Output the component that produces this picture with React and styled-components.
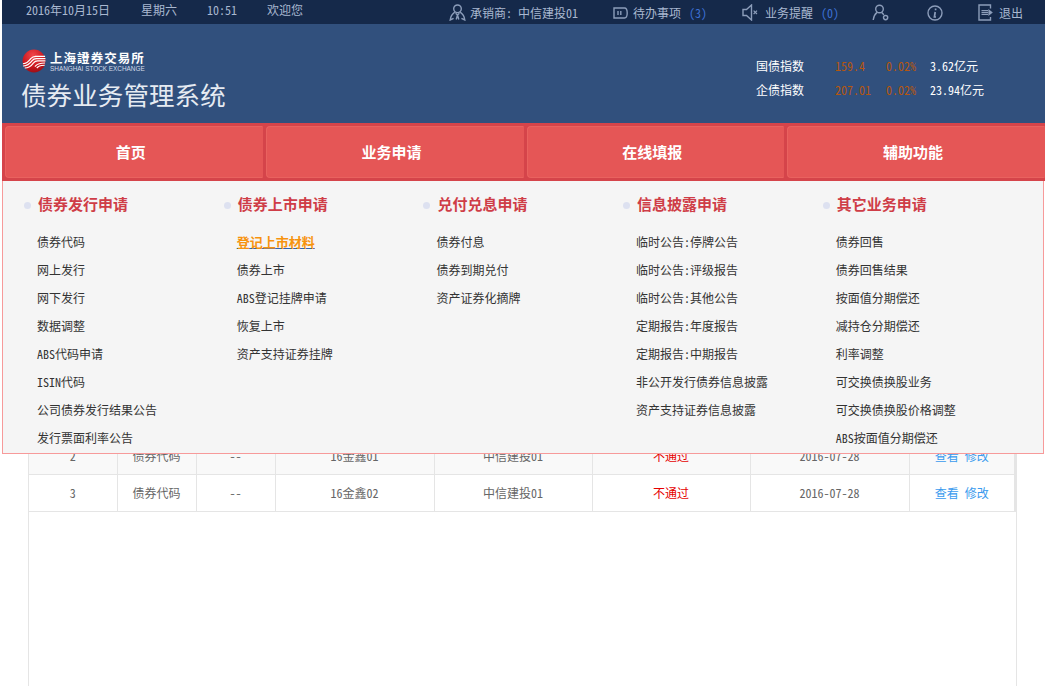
import React from 'react';
import styled, { createGlobalStyle } from 'styled-components';

const GlobalStyle = createGlobalStyle`
  html, body {
    margin: 0;
    padding: 0;
    background: #fff;
    overflow: hidden;
  }
  body {
    font-family: "Noto Sans CJK SC", "Liberation Sans", sans-serif;
    font-size: 12px;
    font-feature-settings: "hwid";
  }
`;

const Page = styled.div`
  position: relative;
  height: 686px;
  padding-left: 2px;
  overflow: hidden;
  display: flex;
  flex-direction: column;
`;

//---------------------------------------- Top bar --------------------------------------
const TopBar = styled.div`
  height: 24px;
  flex: none;
  background: #15294a;
  color: #a9b8d0;
  display: flex;
  justify-content: space-between;
  padding: 0 22px 0 24px;
`;

const TopLeft = styled.div`
  display: flex;
  gap: 30px;
  height: 20px;
  line-height: 20px;
`;

const DateText = styled.span`
  margin-right: 1px;
`;

const TopRight = styled.div`
  display: flex;
  align-items: center;
  padding-top: 1px;
`;

const TopItem = styled.div`
  display: flex;
  align-items: center;
  gap: ${({ $gap }) => $gap || 6}px;
  margin-left: ${({ $ml }) => $ml || 0}px;
  white-space: pre;
`;

const TopCount = styled.span`
  color: #3d70d4;
  margin-left: 8px;
`;

const Icon = styled.svg`
  display: block;
  flex: none;
  fill: none;
  stroke: #8c9dba;
  stroke-width: 1.4;
`;

//---------------------------------------- Header --------------------------------------
const Header = styled.div`
  height: 99px;
  flex: none;
  background: #31507d;
  display: flex;
  justify-content: space-between;
`;

const Brand = styled.div`
  padding: 24px 0 0 20px;
`;

const LogoRow = styled.div`
  display: flex;
  align-items: center;
  gap: 4px;
  height: 26px;
`;

const LogoText = styled.div`
  color: #fff;
`;

const LogoCn = styled.div`
  font-family: "Noto Sans CJK TC", sans-serif;
  font-weight: 700;
  font-size: 12.5px;
  letter-spacing: 1.05px;
  line-height: 15px;
`;

const LogoEn = styled.div`
  font-family: "Liberation Sans", sans-serif;
  font-size: 6.4px;
  line-height: 8px;
  color: #d5dce8;
  white-space: nowrap;
`;

const SystemName = styled.div`
  color: #e6ebf2;
  font-size: 25.5px;
  letter-spacing: 0.1px;
  line-height: 34px;
  margin: 3px 0 0 -1px;
  white-space: nowrap;
`;

const Stats = styled.div`
  display: grid;
  grid-template-columns: 79px 51px 44px 94px;
  grid-auto-rows: 24px;
  align-items: center;
  padding: 29px 21px 0 0;
  color: #fff;
  width: 268px;
`;

const StatValue = styled.span`
  color: #b5560f;
`;

//---------------------------------------- Nav --------------------------------------
const Nav = styled.div`
  height: 52px;
  flex: none;
  background: #d5444a;
  padding: 3px 0 3px 3px;
  display: grid;
  grid-template-columns: repeat(4, 1fr);
  gap: 3px;
`;

const NavTab = styled.div`
  background: #e55656;
  border: 1px solid #e9625f;
  border-right-color: #e55656;
  border-radius: 4px 0 0 4px;
  color: #fff;
  font-weight: 700;
  font-size: 15px;
  display: flex;
  align-items: center;
  justify-content: center;
  padding: 0 6px 2px 0;
`;

//---------------------------------------- Dropdown panel --------------------------------------
const Panel = styled.div`
  position: absolute;
  left: 2px;
  right: 1px;
  top: 181px;
  height: 273px;
  box-sizing: border-box;
  background: #f5f5f5;
  border: 1px solid #f79a9a;
  border-top: 0;
  padding: 13px 0 0 21px;
  display: grid;
  grid-template-columns: repeat(5, 199.7px);
  align-items: start;
`;

const ColumnTitle = styled.div`
  position: relative;
  height: 20px;
  line-height: 20px;
  padding-left: 14px;
  font-size: 15px;
  font-weight: 700;
  color: #cf3d47;
  &::before {
    content: '';
    position: absolute;
    left: 0;
    top: 8px;
    width: 7px;
    height: 7px;
    border-radius: 50%;
    background: #dde1f0;
  }
`;

const MenuList = styled.div`
  margin-top: 13.8px;
`;

const MenuItem = styled.div`
  height: 28.1px;
  line-height: 28.1px;
  padding-left: 13px;
  color: ${({ $active }) => ($active ? '#f7930e' : '#333')};
  font-weight: ${({ $active }) => ($active ? 700 : 400)};
  font-size: ${({ $active }) => ($active ? 13 : 12)}px;
  white-space: nowrap;
  ${({ $active }) => $active && `
    text-decoration: underline;
    text-decoration-color: #2f66b5;
  `}
`;

//---------------------------------------- Table --------------------------------------
const Content = styled.div`
  flex: 1;
  padding: 0 28px 0 26px;
  min-height: 0;
`;

const TableWrap = styled.div`
  height: 100%;
  box-sizing: border-box;
  border: solid #e5e5e5;
  border-width: 0 1px;
  padding-top: 256px;
`;

const Table = styled.table`
  width: 986px;
  border-collapse: collapse;
  table-layout: fixed;
  color: #666;
`;

const Row = styled.tr`
  height: 37px;
  background: ${({ $striped }) => ($striped ? '#f9f9f9' : '#fff')};
`;

const Cell = styled.td`
  border-right: 1px solid #e5e5e5;
  border-bottom: 1px solid #e5e5e5;
  padding: 0;
  text-align: center;
  &:last-child {
    border-right-width: 2px;
  }
`;

const Failed = styled.span`
  color: #e60000;
`;

const TableLink = styled.a`
  color: #3a9bee;
  & + & {
    margin-left: 6px;
  }
`;

const PersonIcon = () => (
  <Icon width="17" height="17" viewBox="0 0 17 17">
    <circle cx="8.5" cy="4.8" r="3.8" />
    <path d="M5.8 8.2 C3.2 10 1.6 12.6 1.2 16 L4.6 14.4 M11.2 8.2 C13.8 10 15.4 12.6 15.8 16 L12.4 14.4 M6.6 9.2 L8.5 11 L10.4 9.2 M8.5 11 L7.2 15.5 M8.5 11 L9.8 15.5" />
  </Icon>
);

const TodoIcon = () => (
  <Icon width="15" height="12" viewBox="0 0 15 12">
    <path d="M1 1 H11.5 C13.2 1 14.2 3 14.2 6 C14.2 9 13.2 11 11.5 11 H1 Z" />
    <path d="M5 4 V8 M7.8 4 V8" />
  </Icon>
);

const SpeakerIcon = () => (
  <Icon width="16" height="17" viewBox="0 0 16 17">
    <path d="M1 5.5 H4.5 L9.5 1 V16 L4.5 11.5 H1 Z" />
    <path d="M11.6 6.6 L15 10 M15 6.6 L11.6 10" strokeWidth="1.2" />
  </Icon>
);

const UserIcon = () => (
  <Icon width="17" height="17" viewBox="0 0 17 17">
    <circle cx="7.5" cy="5" r="3.8" />
    <path d="M5 8.4 C3 10 1.6 12.5 1.2 16 M9.8 8.6 C10.6 9.2 11.3 9.9 11.8 10.8" />
    <circle cx="13.6" cy="13.6" r="2.1" />
  </Icon>
);

const InfoIcon = () => (
  <Icon width="16" height="16" viewBox="0 0 16 16">
    <circle cx="8" cy="8" r="7" />
    <path d="M8.6 3.6 V5.2 M8.2 7 L7.4 12 H9" strokeWidth="1.7" />
  </Icon>
);

const ExitIcon = () => (
  <Icon width="16" height="17" viewBox="0 0 16 17">
    <path d="M12.5 4.5 V1 H1 V16 H12.5 V13" />
    <path d="M3.5 6.6 H10 M3.5 8.5 H10 M3.5 10.4 H10" strokeWidth="1.1" />
    <path d="M10.4 5 L14.8 8.5 L10.4 12 Z" fill="#8c9dba" stroke="none" />
  </Icon>
);

const Logo = () => (
  <svg width="24" height="24" viewBox="0 0 26 26" style={{ display: 'block', flex: 'none' }}>
    <defs>
      <radialGradient id="logoRed" cx="45%" cy="25%" r="85%">
        <stop offset="0" stopColor="#f2464a" />
        <stop offset="0.6" stopColor="#c8141c" />
        <stop offset="1" stopColor="#8c0d14" />
      </radialGradient>
    </defs>
    <circle cx="13" cy="13" r="12.4" fill="url(#logoRed)" />
    <path
      d="M1 16 C5 16 7 14 9.5 10.5 C11 8.6 12.5 8 15 8 M1.2 18.4 C6 18.4 8.5 16 11 12.6 C12.4 10.8 13.6 10.4 15.5 10.4 M3 20.6 C7.5 20.6 10 18.4 12.5 15 C13.8 13.2 15 12.8 17 12.8 M14 8 H25 M15.5 10.4 H25.4 M17 12.8 H25.4 M14 19 C16 17 17 15.2 25 15.2 M16 20.6 C18 18.6 19 17.6 24.6 17.6"
      fill="none"
      stroke="#fff"
      strokeWidth="1.25"
    />
  </svg>
);

const menus = [
  {
    title: '债券发行申请',
    items: ['债券代码', '网上发行', '网下发行', '数据调整', 'ABS代码申请', 'ISIN代码', '公司债券发行结果公告', '发行票面利率公告'],
  },
  {
    title: '债券上市申请',
    active: '登记上市材料',
    items: ['登记上市材料', '债券上市', 'ABS登记挂牌申请', '恢复上市', '资产支持证券挂牌'],
  },
  {
    title: '兑付兑息申请',
    items: ['债券付息', '债券到期兑付', '资产证券化摘牌'],
  },
  {
    title: '信息披露申请',
    items: ['临时公告:停牌公告', '临时公告:评级报告', '临时公告:其他公告', '定期报告:年度报告', '定期报告:中期报告', '非公开发行债券信息披露', '资产支持证券信息披露'],
  },
  {
    title: '其它业务申请',
    items: ['债券回售', '债券回售结果', '按面值分期偿还', '减持仓分期偿还', '利率调整', '可交换债换股业务', '可交换债换股价格调整', 'ABS按面值分期偿还'],
  },
];

const rows = [
  { id: 2, name: '16金鑫01', striped: true },
  { id: 3, name: '16金鑫02' },
];

export default function App() {
  return (
    <Page>
      <GlobalStyle />
      <TopBar>
        <TopLeft>
          <DateText>2016年10月15日</DateText>
          <span>星期六</span>
          <span>10:51</span>
          <span>欢迎您</span>
        </TopLeft>
        <TopRight>
          <TopItem $gap={4}>
            <PersonIcon />
            <span>承销商: 中信建投01</span>
          </TopItem>
          <TopItem $ml={35} $gap={5}>
            <TodoIcon />
            <span>待办事项<TopCount>(3)</TopCount></span>
          </TopItem>
          <TopItem $ml={35} $gap={7}>
            <SpeakerIcon />
            <span>业务提醒<TopCount>(0)</TopCount></span>
          </TopItem>
          <TopItem $ml={33}><UserIcon /></TopItem>
          <TopItem $ml={38}><InfoIcon /></TopItem>
          <TopItem $ml={35} $gap={5}>
            <ExitIcon />
            <span>退出</span>
          </TopItem>
        </TopRight>
      </TopBar>

      <Header>
        <Brand>
          <LogoRow>
            <Logo />
            <LogoText>
              <LogoCn>上海證券交易所</LogoCn>
              <LogoEn>SHANGHAI STOCK EXCHANGE</LogoEn>
            </LogoText>
          </LogoRow>
          <SystemName>债券业务管理系统</SystemName>
        </Brand>
        <Stats>
          <span>国债指数</span>
          <StatValue>159.4</StatValue>
          <StatValue>0.02%</StatValue>
          <span>3.62亿元</span>
          <span>企债指数</span>
          <StatValue>207.01</StatValue>
          <StatValue>0.02%</StatValue>
          <span>23.94亿元</span>
        </Stats>
      </Header>

      <Nav>
        <NavTab>首页</NavTab>
        <NavTab>业务申请</NavTab>
        <NavTab>在线填报</NavTab>
        <NavTab>辅助功能</NavTab>
      </Nav>

      <Content>
        <TableWrap>
          <Table>
            <colgroup>
              <col width="88" />
              <col width="79" />
              <col width="79" />
              <col width="159" />
              <col width="158" />
              <col width="158" />
              <col width="159" />
              <col width="106" />
            </colgroup>
            <tbody>
              {rows.map((row) => (
                <Row key={row.id} $striped={row.striped}>
                  <Cell>{row.id}</Cell>
                  <Cell>债券代码</Cell>
                  <Cell>--</Cell>
                  <Cell>{row.name}</Cell>
                  <Cell>中信建投01</Cell>
                  <Cell><Failed>不通过</Failed></Cell>
                  <Cell>2016-07-28</Cell>
                  <Cell>
                    <TableLink>查看</TableLink>
                    <TableLink>修改</TableLink>
                  </Cell>
                </Row>
              ))}
            </tbody>
          </Table>
        </TableWrap>
      </Content>

      <Panel>
        {menus.map((menu) => (
          <div key={menu.title}>
            <ColumnTitle>{menu.title}</ColumnTitle>
            <MenuList>
              {menu.items.map((item) => (
                <MenuItem key={item} $active={item === menu.active}>{item}</MenuItem>
              ))}
            </MenuList>
          </div>
        ))}
      </Panel>
    </Page>
  );
}
